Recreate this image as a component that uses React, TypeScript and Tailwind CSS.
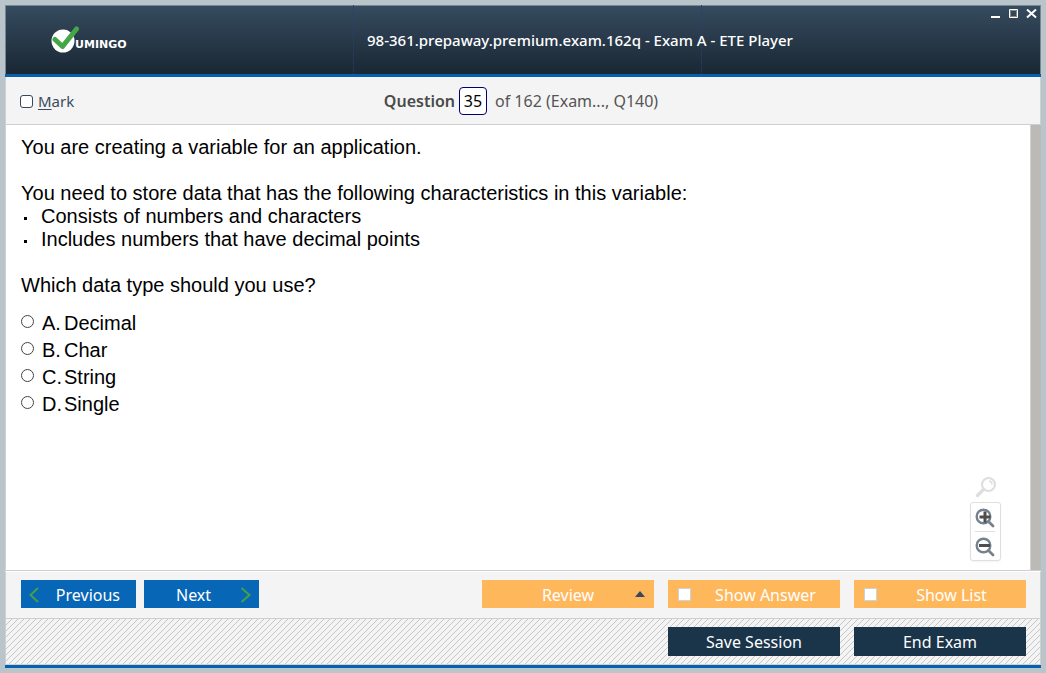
import { useState } from "react";

const options = ["Decimal", "Char", "String", "Single"];
const letters = ["A", "B", "C", "D"];

function Logo() {
  return (
    <div className="flex w-[348px] shrink-0 items-center pl-[46px]">
      <svg width="28" height="28" viewBox="0 0 28 28" aria-hidden="true">
        <circle cx="12" cy="15" r="11.5" fill="#fff" />
        <path d="M4 13.5 L11.5 20.5 L25.500 3" fill="none" stroke="#43a647" strokeWidth="5" strokeLinecap="round" strokeLinejoin="round" />
      </svg>
      <span className="-ml-1 pt-[10px] font-['DejaVu_Sans',sans-serif] text-[11px] leading-3 font-bold text-white">UMINGO</span>
    </div>
  );
}

function Header() {
  return (
    <header className="relative flex h-[72px] shrink-0 border-b-[3px] border-[#0560b0] bg-linear-to-b from-[#364c60] to-[#1a2734] shadow-[inset_0_1px_0_#768890,inset_1px_0_0_#768890,inset_-1px_0_0_#768890]">
      <Logo />
      <h1 className="flex w-[349px] items-center border-x border-dotted border-[#2b3f68] pt-px pl-[13px] text-[15px] font-medium whitespace-nowrap text-white">
        98-361.prepaway.premium.exam.162q - Exam A - ETE Player
      </h1>
      <div className="absolute top-1 right-1 flex gap-2">
        <button type="button" aria-label="Minimize">
          <svg width="10" height="10" viewBox="0 0 10 10"><path d="M0 8h9" stroke="#fff" strokeWidth="2" /></svg>
        </button>
        <button type="button" aria-label="Maximize">
          <svg width="9" height="10" viewBox="0 0 9 10"><path d="M.5 .5h8v8h-8z" fill="none" stroke="#fff" /><path d="M1.5 1.5h6v6h-6z" fill="none" stroke="#8c8880" /></svg>
        </button>
        <button type="button" aria-label="Close">
          <svg width="11" height="10" viewBox="0 0 11 10"><path d="M1 .5l9 8M10 .5l-9 8" stroke="#fff" strokeWidth="2" /></svg>
        </button>
      </div>
    </header>
  );
}

function ZoomIcon({ plus }: { plus?: boolean }) {
  return (
    <svg width="20" height="20" viewBox="0 0 20 20" fill="none" aria-hidden="true">
      <circle cx="8.5" cy="8.5" r="6.8" stroke="#75828e" strokeWidth="2.4" />
      <path d="M13.5 13.5l4.5 4.5" stroke="#75828e" strokeWidth="2.8" strokeLinecap="round" />
      <path d={plus ? "M4.5 9h11M10 3.5v11" : "M4 8.5h11"} stroke="#4d4d4d" strokeWidth="3" />
    </svg>
  );
}

export default function App() {
  const [choice, setChoice] = useState("");
  return (
    <div className="flex min-h-screen flex-col bg-[#b9c5cb] p-[5px] font-['Noto_Sans',sans-serif]">
      <div className="flex flex-1 flex-col border-b-[3px] border-[#0560b0] bg-[#f4f4f4]">
        <Header />

        <div className="relative flex h-12 shrink-0 items-center justify-center border border-t-0 border-[#cfcfcf] pr-1 text-[16px] text-[#555]">
          <label className="absolute left-[14px] flex items-center gap-[5px] pt-0.5 text-[15px] text-[#3b4c5c]">
            <input type="checkbox" className="size-[13px] appearance-none rounded-[3px] border border-[#34495c] bg-white checked:bg-[#34495c]" />
            <span><u className="underline-offset-2">M</u>ark</span>
          </label>
          <label htmlFor="question" className="font-semibold text-[#4a4a4a]">Question</label>
          <input id="question" defaultValue="35" className="mx-1 h-7 w-7 rounded-[4px] border border-[#00006e] bg-white text-center text-[16px] text-black" />
          <span className="pl-1">of 162 (Exam..., Q140)</span>
        </div>

        <div className="flex flex-1 border-b border-[#cfcfcf] bg-white">
          <main className="relative flex-1 border-x border-[#d2d2d2] px-[15px] pt-[11px] font-['Liberation_Sans',sans-serif] text-[20px] leading-[23px] text-black">
            <p>You are creating a variable for an application.</p>
            <p className="mt-[23px]">You need to store data that has the following characteristics in this variable:</p>
            <ul>
              {["Consists of numbers and characters", "Includes numbers that have decimal points"].map((t) => (
                <li key={t} className="flex items-center">
                  <span className="mt-1 mr-[14px] ml-[3px] size-[3px] bg-black" />
                  {t}
                </li>
              ))}
            </ul>
            <p className="mt-[23px]">Which data type should you use?</p>
            <div className="mt-[13px] flex flex-col items-start leading-[27px]">
              {options.map((o, i) => (
                <label key={o} className="flex items-center">
                  <input
                    type="radio"
                    name="answer"
                    checked={choice === o}
                    onChange={() => setChoice(o)}
                    className="mr-2 mb-1 size-[13px] appearance-none rounded-full border border-[#444] bg-white checked:border-4"
                  />
                  <span className="w-[22px]">{letters[i]}.</span>
                  <span>{o}</span>
                </label>
              ))}
            </div>
            <div className="absolute right-[29px] bottom-[9px] flex flex-col items-center">
              <svg width="22" height="22" viewBox="0 0 22 22" fill="none" aria-hidden="true">
                <circle cx="13.5" cy="8.5" r="6.5" stroke="#dedede" strokeWidth="2.2" />
                <path d="M8.5 13.5l-6 6" stroke="#dedede" strokeWidth="3.4" strokeLinecap="round" />
                <path d="M14 5q3 .5 3 3.5" stroke="#dedede" strokeWidth="1.6" />
              </svg>
              <div className="mt-1 flex w-[31px] flex-col items-start rounded-[3px] border border-[#dfdfdf] pl-1 shadow-xs">
                <button type="button" aria-label="Zoom in" className="flex h-[29px] items-center border-b border-[#dfdfdf] pt-px"><ZoomIcon plus /></button>
                <button type="button" aria-label="Zoom out" className="flex h-7 items-center pt-px"><ZoomIcon /></button>
              </div>
            </div>
          </main>
          <div className="-mt-px w-[10px] bg-[#bbbab6]" />
        </div>

        <div className="flex h-12 shrink-0 items-start justify-between border-x border-t border-b border-x-[#cfcfcf] border-t-white border-b-[#cfcfcf] pt-2 pr-[14px] pl-[15px] text-[16px] text-white">
          <div className="flex gap-2">
            <button type="button" className="flex h-7 w-[115px] items-center justify-between bg-[#0866b6] pt-px pr-4 pl-2">
              <svg width="10" height="16" viewBox="0 0 10 16" fill="none"><path d="M9 1L1.500 8 9 15" stroke="#43a047" strokeWidth="2" /></svg>
              Previous
            </button>
            <button type="button" className="flex h-7 w-[115px] items-center justify-between bg-[#0866b6] pt-px pr-2 pl-8">
              Next
              <svg width="11" height="16" viewBox="0 0 11 16" fill="none"><path d="M1.500 1L9.500 8 1.500 15" stroke="#43a047" strokeWidth="2" /></svg>
            </button>
          </div>
          <div className="flex gap-[14px]">
            <button type="button" className="relative h-7 w-[172px] bg-[#ffb75c] pt-px">
              Review
              <svg width="10" height="6" viewBox="0 0 10 6" className="absolute top-[11px] right-[9px]"><path d="M0 6L5 0l5 6z" fill="#34495c" /></svg>
            </button>
            {["Show Answer", "Show List"].map((t) => (
              <label key={t} className="flex h-7 w-[172px] items-center bg-[#ffb75c] pt-px pl-[10px]">
                <input type="checkbox" className="size-[13px] appearance-none border border-[#ccd3d8] bg-white checked:bg-[#34495c]" />
                <span className="flex-1 text-center">{t}</span>
              </label>
            ))}
          </div>
        </div>

        <div className="flex h-[46px] shrink-0 items-center justify-end gap-[14px] border-x border-b border-[#cfcfcf] bg-[linear-gradient(135deg,transparent_44%,#c6c6c6_44%,#c6c6c6_56%,transparent_56%)] bg-size-[6px_6px] pr-[14px] text-[16px] text-white">
          <button type="button" className="h-[29px] w-[172px] bg-[#1a344a]">Save Session</button>
          <button type="button" className="h-[29px] w-[172px] bg-[#1a344a]">End Exam</button>
        </div>
      </div>
    </div>
  );
}
